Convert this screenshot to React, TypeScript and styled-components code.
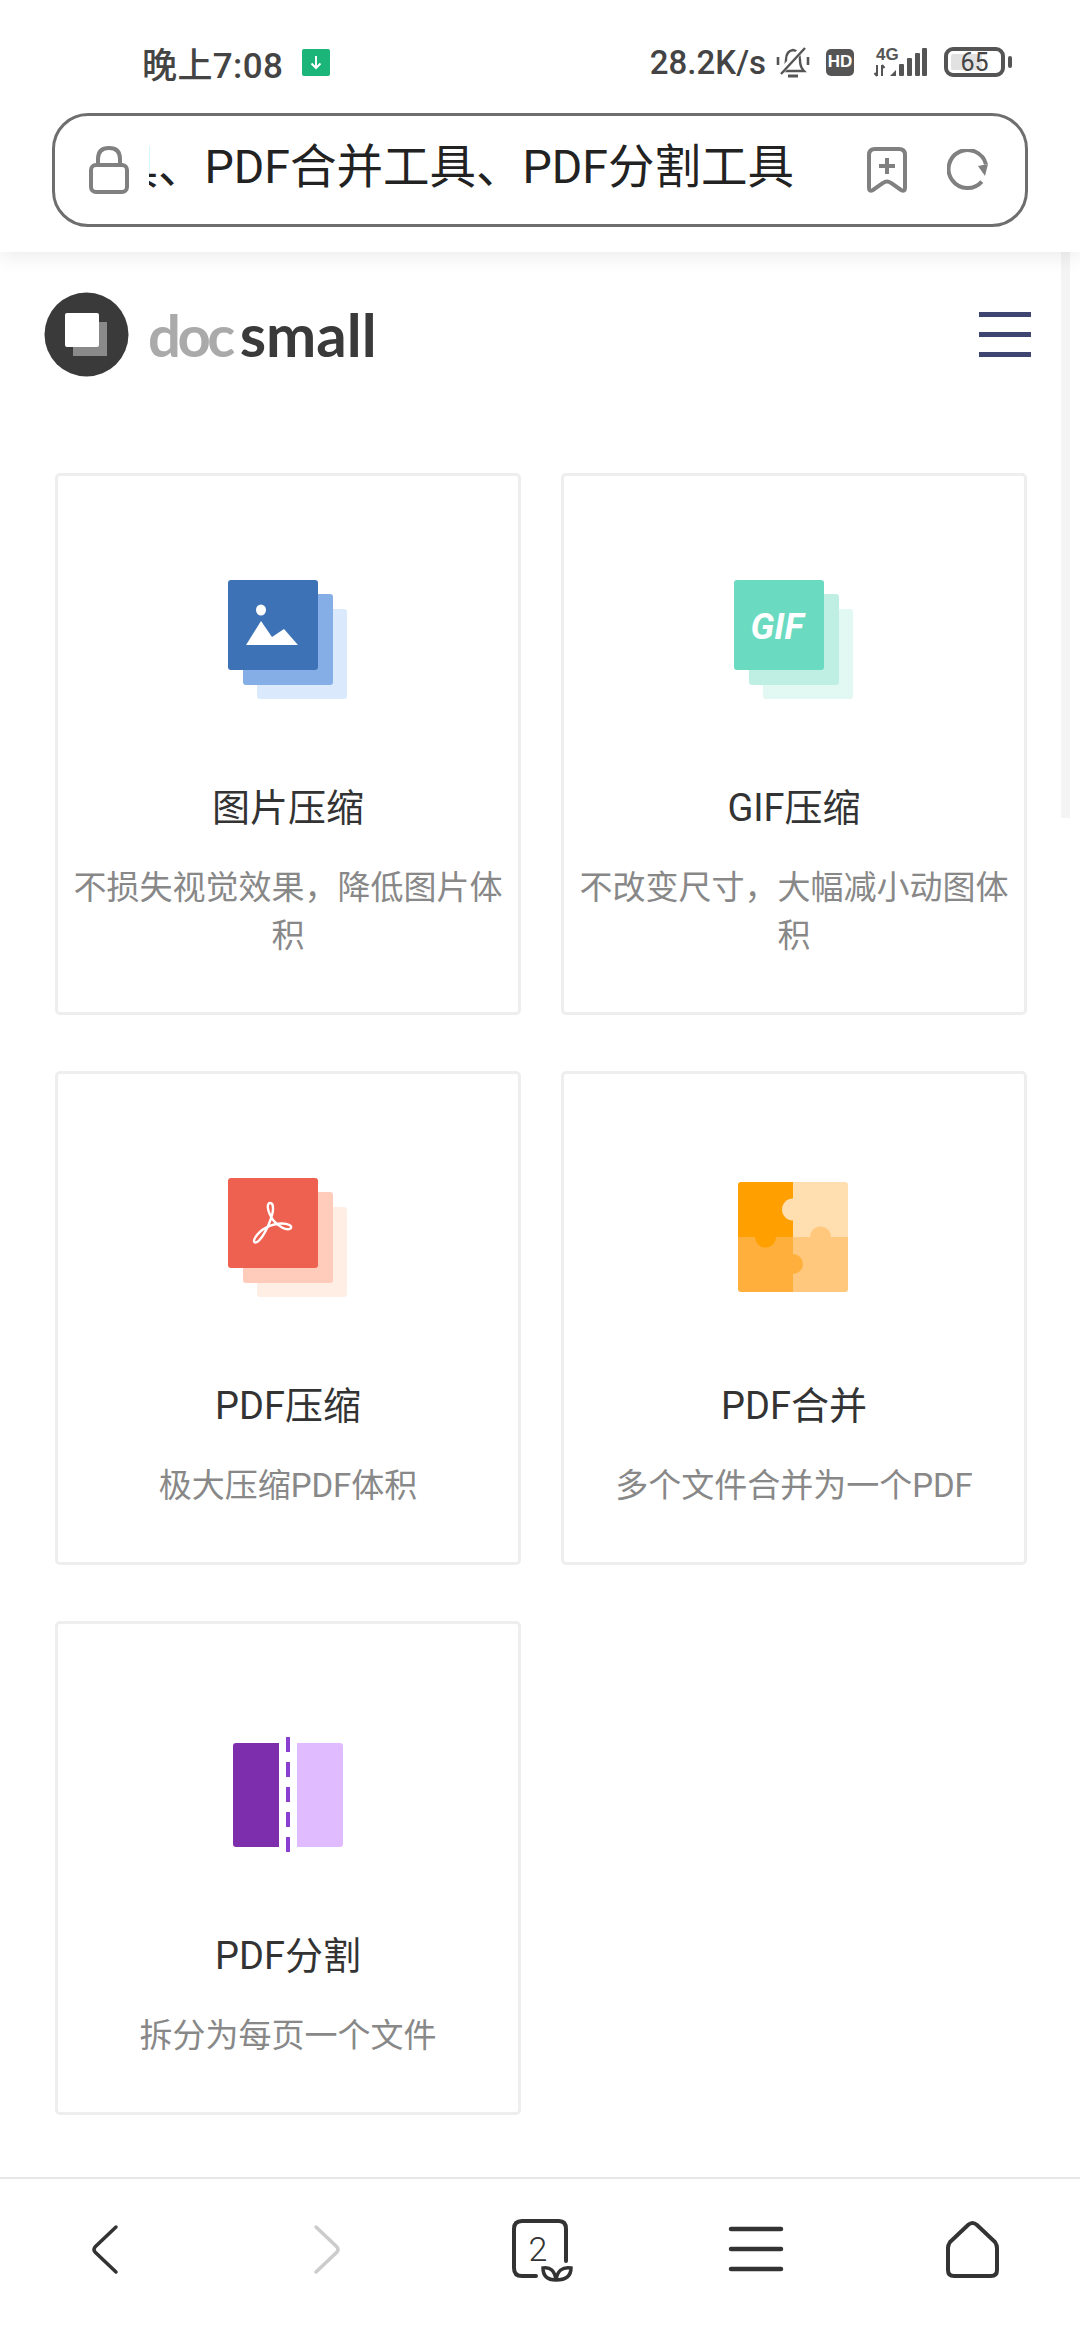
import styled, { createGlobalStyle } from 'styled-components'

const FONT = `Roboto, "Noto Sans CJK SC", "Noto Sans", sans-serif`

const GlobalStyle = createGlobalStyle`
  html, body {
    margin: 0;
    padding: 0;
    background: #fff;
    font-family: ${FONT};
  }
  * {
    box-sizing: border-box;
  }
`

type TStack = {
  front: string
  middle: string
  back: string
  children?: React.ReactNode
}

const PaperStack = ({ front, middle, back, children }: TStack) => (
  <IconSvg viewBox='0 0 120 120'>
    <rect x='29' y='29' width='90' height='90' rx='3' fill={back} />
    <rect x='15' y='14' width='90' height='91' rx='3' fill={middle} />
    <rect x='0' y='0' width='90' height='90' rx='3' fill={front} />
    {children}
  </IconSvg>
)

const ImageIcon = () => (
  <PaperStack front='#3d72b7' middle='#85aee6' back='#dbe9fc'>
    <ellipse cx='33' cy='30' rx='5' ry='5.5' fill='#fff' />
    <path d='M18 65 L33 41 L44 57 L56 49 L70 65 Z' fill='#fff' />
  </PaperStack>
)

const GifIcon = () => (
  <PaperStack front='#6adbc0' middle='#bfeee2' back='#e2f8f2'>
    <GifLabel x='43' y='59' textAnchor='middle'>
      GIF
    </GifLabel>
  </PaperStack>
)

const AcrobatIcon = () => (
  <PaperStack front='#ee6050' middle='#ffccbb' back='#ffeee4'>
    <path
      d='M42 25 C38.5 25 39 33 45 42 C50 48 58 53 62.5 50.5 C65 48 60 45.5 54 45.5 C44 45.5 32 51 27 60 C24 65 28 66 31.5 62 C38 55 45.5 37 45 30 C45 27 44 25 42 25 Z'
      fill='none'
      stroke='#fff'
      strokeWidth='2.4'
    />
  </PaperStack>
)

const PuzzleIcon = () => (
  <IconSvg viewBox='0 0 120 120'>
    <path d='M4 7 Q4 4 7 4 L59 4 L59 59 L4 59 Z' fill='#ff9f00' />
    <path d='M4 59 L59 59 L59 114 L7 114 Q4 114 4 111 Z' fill='#ffb03c' />
    <path d='M59 4 L111 4 Q114 4 114 7 L114 59 L59 59 Z' fill='#ffdeaf' />
    <path d='M59 59 L114 59 L114 111 Q114 114 111 114 L59 114 Z' fill='#ffc87c' />
    <circle cx='59' cy='31.5' r='11' fill='#ffdeaf' />
    <circle cx='31.5' cy='59' r='10.5' fill='#ff9f00' />
    <circle cx='86.5' cy='59' r='10.5' fill='#ffc87c' />
    <circle cx='59' cy='86' r='10' fill='#ffb03c' />
  </IconSvg>
)

const SplitIcon = () => (
  <IconSvg viewBox='0 0 120 120'>
    <path d='M5 18 Q5 15 8 15 L51 15 L51 119 L8 119 Q5 119 5 116 Z' fill='#7d2ead' />
    <path d='M69 15 L112 15 Q115 15 115 18 L115 116 Q115 119 112 119 L69 119 Z' fill='#e1bbff' />
    <path d='M60 9 V125' stroke='#8a3fd0' strokeWidth='4' strokeDasharray='15 10' />
  </IconSvg>
)

const tools = [
  { title: '图片压缩', text: '不损失视觉效果，降低图片体积', icon: <ImageIcon /> },
  { title: 'GIF压缩', text: '不改变尺寸，大幅减小动图体积', icon: <GifIcon /> },
  { title: 'PDF压缩', text: '极大压缩PDF体积', icon: <AcrobatIcon /> },
  { title: 'PDF合并', text: '多个文件合并为一个PDF', icon: <PuzzleIcon /> },
  { title: 'PDF分割', text: '拆分为每页一个文件', icon: <SplitIcon /> },
]

const App = () => {
  return (
    <Screen>
      <GlobalStyle />
      <Toolbar>
        <StatusBar>
          <StatusLeft>
            <Time>晚上7:08</Time>
            <DownloadBadge viewBox='0 0 28 27'>
              <rect width='28' height='27' rx='2' fill='#1bb57a' />
              <path d='M14 7 V19 M9.5 14.5 L14 19 L18.5 14.5' stroke='#fff' strokeWidth='2' fill='none' />
            </DownloadBadge>
          </StatusLeft>
          <StatusRight>
            <Speed>28.2K/s</Speed>
            <svg width='34' height='32' viewBox='0 0 34 32' fill='none' stroke='#555' strokeWidth='2.4'>
              <path d='M6 25 Q10 21 10 14 Q10 5 17 4 Q24 5 24 14 Q24 21 28 25 Z' />
              <path d='M12 30 H22' strokeWidth='3' />
              <path d='M2 11 V19 M32 11 V19' strokeWidth='2.6' />
              <path d='M4 27 L28 1' stroke='#fff' strokeWidth='6' />
              <path d='M5 28 L29 2' />
            </svg>
            <HdBadge>HD</HdBadge>
            <svg width='56' height='30' viewBox='0 0 56 30'>
              <SignalLabel x='4' y='13'>
                4G
              </SignalLabel>
              <path d='M5 18 V29 M2.5 26 L5 29 M10 18 V29 M10 18 L12.5 21' stroke='#555' strokeWidth='2' fill='none' />
              <path d='M18 29 L24 23 V29 Z' fill='#555' />
              <rect x='27' y='17' width='5' height='12' rx='1' fill='#555' />
              <rect x='35' y='11' width='5' height='18' rx='1' fill='#555' />
              <rect x='43' y='6' width='5' height='23' rx='1' fill='#555' />
              <rect x='50' y='1' width='5' height='28' rx='1' fill='#555' />
            </svg>
            <Battery>
              <BatteryCase>
                <BatteryFill style={{ width: '65%' }} />
                <BatteryLevel>65</BatteryLevel>
              </BatteryCase>
              <BatteryTip />
            </Battery>
          </StatusRight>
        </StatusBar>
        <AddressBar>
          <svg width='40' height='48' viewBox='0 0 40 48' fill='none' stroke='#808080' strokeWidth='4'>
            <rect x='2' y='19' width='36' height='27' rx='5' />
            <path d='M9 19 V13 Q9 2 20 2 Q31 2 31 13 V19' />
          </svg>
          <PageTitle>
            <span>图片压缩工具、GIF压缩工具、PDF压缩工具、PDF合并工具、PDF分割工具</span>
          </PageTitle>
          <AddressActions>
            <svg width='40' height='46' viewBox='0 0 40 46' fill='none' stroke='#808080' strokeWidth='4'>
              <path d='M2 8 Q2 2 8 2 H32 Q38 2 38 8 V41 Q38 45 34 43 L24 36 Q20 33 16 36 L6 43 Q2 45 2 41 Z' />
              <path d='M20 11 V27 M12 19 H28' />
            </svg>
            <svg width='42' height='42' viewBox='0 0 42 42' fill='none'>
              <path d='M39 21 A19 19 0 1 1 31 5' stroke='#808080' strokeWidth='4' transform='rotate(40 21 21)' />
              <path d='M31 17 L41 15 L38 27 Z' fill='#808080' />
            </svg>
          </AddressActions>
        </AddressBar>
      </Toolbar>

      <Page>
        <ScrollThumb />
        <SiteHeader>
          <Brand>
            <svg width='85' height='85' viewBox='0 0 85 85'>
              <circle cx='42.5' cy='42.5' r='42' fill='#3a3a3a' />
              <rect x='29' y='30' width='34' height='34' fill='#8a8a8a' />
              <rect x='21' y='21' width='34' height='34' rx='2' fill='#fff' />
            </svg>
            <BrandName>
              <span>doc</span>
              <strong>small</strong>
            </BrandName>
          </Brand>
          <MenuButton>
            <span />
            <span />
            <span />
          </MenuButton>
        </SiteHeader>

        <ToolGrid>
          {tools.map((tool) => (
            <ToolCard key={tool.title}>
              {tool.icon}
              <ToolTitle>{tool.title}</ToolTitle>
              <ToolText>{tool.text}</ToolText>
            </ToolCard>
          ))}
        </ToolGrid>
      </Page>

      <BottomNav>
        <svg width='80' height='64' viewBox='0 0 80 64' fill='none' stroke='#333' strokeWidth='3.5' strokeLinecap='round'>
          <path d='M48 9 L27 29 Q25 31.5 27 34 L48 54' />
        </svg>
        <svg width='80' height='64' viewBox='0 0 80 64' fill='none' stroke='#ccc' strokeWidth='3.5' strokeLinecap='round'>
          <path d='M32 9 L53 29 Q55 31.5 53 34 L32 54' />
        </svg>
        <svg width='80' height='64' viewBox='0 0 80 64' fill='none' stroke='#333' strokeWidth='4' strokeLinecap='round'>
          <path d='M36 58 H22 Q14 58 14 50 V11 Q14 3 22 3 H59 Q66 3 66 11 V43' />
          <TabCount x='38' y='43' textAnchor='middle'>
            2
          </TabCount>
          <path d='M56 62 Q43 62 43 50 Q54 48 56 62 Q58 48 71 50 Q71 62 56 62 Z' strokeWidth='3.5' />
        </svg>
        <svg width='80' height='64' viewBox='0 0 80 64' fill='none' stroke='#333' strokeWidth='4.5' strokeLinecap='round'>
          <path d='M15 11 H65 M15 31 H65 M15 51 H65' />
        </svg>
        <svg width='80' height='64' viewBox='0 0 80 64' fill='none' stroke='#333' strokeWidth='4'>
          <path d='M16 30 Q16 27 18 24 L36 7 Q40.5 3 45 7 L63 24 Q65 27 65 30 L65 52 Q65 58 59 58 L22 58 Q16 58 16 52 Z' />
        </svg>
      </BottomNav>
    </Screen>
  )
}

export default App

const Screen = styled.div`
  width: 1080px;
  height: 2340px;
  display: flex;
  flex-direction: column;
  overflow: hidden;
  background: #fff;
`

const Toolbar = styled.header`
  height: 252px;
  flex-shrink: 0;
  padding: 44px 52px 0;
  position: relative;
  z-index: 1;
  background: #fff;
  box-shadow: 0 6px 18px rgba(0, 0, 0, 0.07);
`

const StatusBar = styled.div`
  height: 36px;
  margin-bottom: 33px;
  display: flex;
  align-items: center;
  justify-content: space-between;
  padding: 0 16px 0 90px;
  color: #444;
`

const StatusLeft = styled.div`
  display: flex;
  align-items: center;
  gap: 19px;
`

const StatusRight = styled.div`
  display: flex;
  align-items: center;
  gap: 10px;
`

const Time = styled.span`
  font-size: 35px;
  font-weight: 500;
  letter-spacing: 0.4px;
`

const DownloadBadge = styled.svg`
  width: 28px;
  height: 27px;
`

const Speed = styled.span`
  font-size: 33px;
  font-weight: 500;
`

const HdBadge = styled.span`
  width: 28px;
  height: 27px;
  margin: 0 8px 0 6px;
  border-radius: 5px;
  background: #555;
  color: #fff;
  font-family: 'Liberation Sans', sans-serif;
  font-size: 17px;
  font-weight: 700;
  display: flex;
  align-items: center;
  justify-content: center;
`

const SignalLabel = styled.text`
  font-family: 'Liberation Sans', sans-serif;
  font-size: 17px;
  font-weight: 700;
  fill: #555;
`

const Battery = styled.div`
  display: flex;
  align-items: center;
  gap: 3px;
  margin-left: 6px;
`

const BatteryCase = styled.div`
  width: 61px;
  height: 30px;
  border: 4px solid #555;
  border-radius: 9px;
  padding: 3px;
  position: relative;
  display: flex;
`

const BatteryFill = styled.div`
  background: #e2e2e2;
  border-radius: 2px;
`

const BatteryLevel = styled.span`
  position: absolute;
  inset: 0;
  display: flex;
  align-items: center;
  justify-content: center;
  font-size: 25px;
  color: #444;
`

const BatteryTip = styled.div`
  width: 4px;
  height: 12px;
  border-radius: 2px;
  background: #555;
`

const AddressBar = styled.div`
  height: 114px;
  border: 3px solid #6e6e6e;
  border-radius: 36px;
  padding: 0 36px 0 34px;
  display: flex;
  align-items: center;
`

const PageTitle = styled.div`
  width: 645px;
  margin-left: 20px;
  margin-top: -6px;
  overflow: hidden;
  display: flex;
  justify-content: flex-end;
  white-space: nowrap;
  font-size: 46.5px;
  line-height: 60px;
  color: #222;
`

const AddressActions = styled.div`
  margin-left: auto;
  display: flex;
  align-items: center;
  gap: 40px;
`

const Page = styled.main`
  flex: 1;
  position: relative;
`

const ScrollThumb = styled.div`
  position: absolute;
  top: 0;
  right: 10px;
  width: 9px;
  height: 566px;
  background: #f4f4f4;
`

const SiteHeader = styled.div`
  padding: 40px 49px 0 44px;
  display: flex;
  align-items: center;
  justify-content: space-between;
`

const Brand = styled.div`
  display: flex;
  align-items: center;
  gap: 19px;
`

const BrandName = styled.div`
  font-family: Lato, sans-serif;
  font-size: 58px;
  line-height: 85px;
  font-weight: 700;
  color: #aaa;
  display: flex;
  gap: 8px;

  span {
    letter-spacing: -3.5px;
  }

  strong {
    color: #3a3a3a;
    font-size: 60px;
    font-weight: 700;
  }
`

const MenuButton = styled.div`
  width: 52px;
  display: flex;
  flex-direction: column;
  gap: 15px;

  span {
    height: 5px;
    background: #3d4570;
  }
`

const ToolGrid = styled.div`
  margin-top: 96px;
  padding: 0 53px 0 55px;
  display: grid;
  grid-template-columns: repeat(2, 1fr);
  column-gap: 40px;
  row-gap: 56px;
`

const ToolCard = styled.article`
  border: 3px solid #eee;
  border-radius: 5px;
  padding: 104px 10px 52px;
  display: flex;
  flex-direction: column;
  align-items: center;
  text-align: center;
`

const IconSvg = styled.svg`
  width: 120px;
  height: 120px;
  overflow: visible;
`

const GifLabel = styled.text`
  font-family: Roboto, sans-serif;
  font-size: 36px;
  font-weight: 700;
  font-style: italic;
  fill: #fff;
`

const ToolTitle = styled.h3`
  margin: 84px 0 0;
  font-size: 38px;
  line-height: 48px;
  font-weight: 400;
  color: #333;
`

const ToolText = styled.p`
  margin: 32px 0 0;
  font-size: 33px;
  line-height: 48px;
  color: #888;
`

const BottomNav = styled.nav`
  height: 163px;
  flex-shrink: 0;
  border-top: 2px solid #e6e6e6;
  padding-top: 39px;
  display: grid;
  grid-template-columns: repeat(5, 216px);
  justify-items: center;
  align-items: start;
`

const TabCount = styled.text`
  font-family: Roboto, sans-serif;
  font-size: 34px;
  font-weight: 300;
  fill: #333;
  stroke: none;
`
